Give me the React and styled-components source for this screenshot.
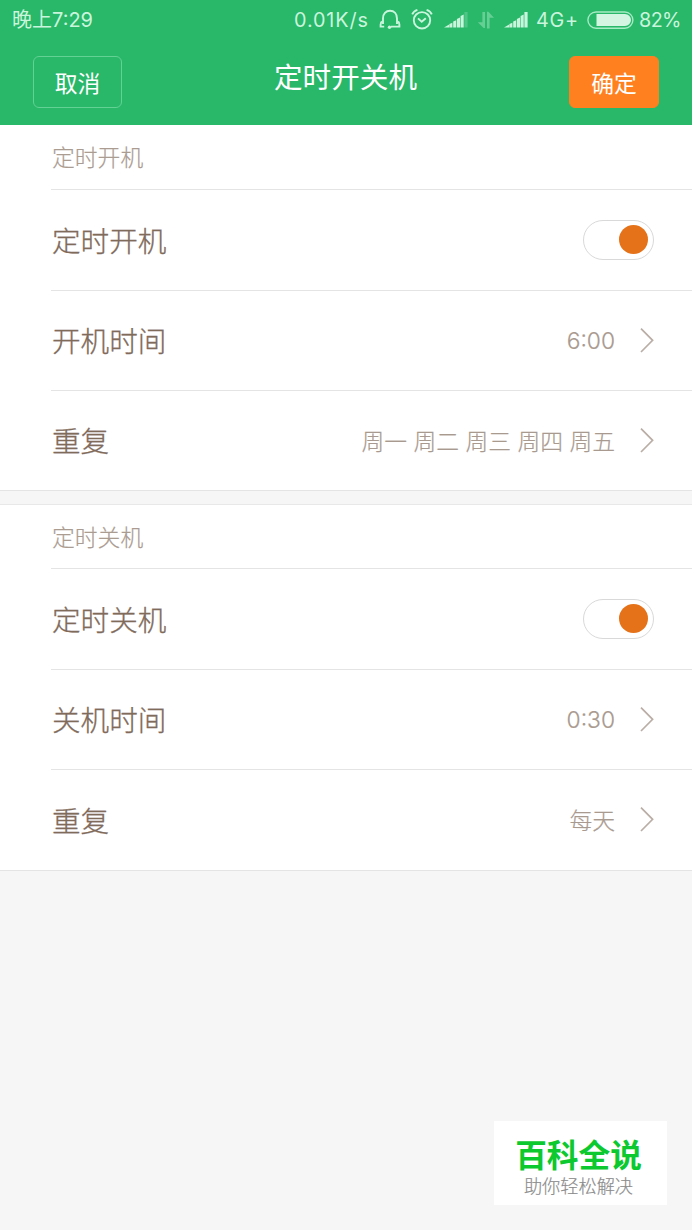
import React from 'react'
import styled, { createGlobalStyle } from 'styled-components'

const GlobalStyle = createGlobalStyle`
* {
    box-sizing: border-box;
}

body {
    margin: 0;
    background-color: #f6f6f6;
    font-family: Inter, "Noto Sans CJK SC", sans-serif;
}
`

const Signal = ({ weak }) => (
    <svg width="25" height="18" viewBox="0 0 25 18" fill="#c9f5dc">
        <path d="M0 16.5 L5.2 13.5 V16.5Z" />
        <path d="M5.4 13 L8.4 11.8 V16.5 H5.4Z" />
        <path d="M9.2 10.5 L12.2 9.2 V16.5 H9.2Z" />
        <path d="M12.9 8 L16 6.6 V16.5 H12.9Z" />
        <path d="M16.6 5 L19.7 3.6 V16.5 H16.6Z" />
        <rect x="20.4" y="1" width="3.2" height="15.5" opacity={weak ? 0.25 : 1} />
    </svg>
)

const Headphones = () => (
    <svg width="22" height="22" viewBox="0 0 22 22" fill="none" stroke="#c9f5dc" strokeWidth="1.9">
        <path d="M4 15 V9.4 C4 5 6.8 1.8 11 1.8 S18 5 18 9.4 V15" />
        <path d="M3.6 12.5 C2 13 1.6 14.2 1.6 15.4 V17.6 H5.2 M18.4 12.5 C20 13 20.4 14.2 20.4 15.4 V17.6 H12" strokeWidth="1.9" />
        <circle cx="10.5" cy="18.2" r="1.7" fill="#c9f5dc" stroke="none" />
    </svg>
)

const Alarm = () => (
    <svg width="22" height="22" viewBox="0 0 22 22" fill="none" stroke="#c9f5dc" strokeWidth="1.9">
        <circle cx="11" cy="11.3" r="8.2" />
        <path d="M7 9.4 L10.7 12.8 L14.8 9.2" />
        <path d="M1.2 5.4 C2 3.4 3.7 1.8 6.4 0.9 M20.8 5.4 C20 3.4 18.3 1.8 15.6 0.9" />
    </svg>
)

const Transfer = () => (
    <svg width="18" height="18" viewBox="0 0 18 18" fill="#66cf94">
        <path d="M5.4 1 H8 V17 H6.6 L0.8 11.2 H5.4Z" />
        <path d="M10 17.4 V0.8 H11.4 L17 6.8 H12.6 V17.4Z" />
    </svg>
)

const Battery = () => (
    <svg width="47" height="19" viewBox="0 0 47 19">
        <rect x="0.9" y="1" width="45" height="16.2" rx="8.1" fill="none" stroke="#a5ebc3" strokeWidth="1.4" />
        <path d="M9.5 3.1 H38 A6 6 0 0 1 38 15.1 H9.5 Z" fill="#d3f5e1" />
    </svg>
)

const Arrow = () => (
    <ArrowIcon width="14" height="26" viewBox="0 0 14 26" fill="none" stroke="#b9ada5" strokeWidth="1.7">
        <path d="M1 0.7 L12.6 12.3 L1 24" />
    </ArrowIcon>
)

const Item = ({ label, value, tall }) => (
    <Row $tall={tall}>
        <Label>{label}</Label>
        {value ? (
            <>
                <Value>{value}</Value>
                <Arrow />
            </>
        ) : (
            <Toggle>
                <Knob />
            </Toggle>
        )}
    </Row>
)

const App = () => {
    return (
        <Page>
            <GlobalStyle />
            <Header>
                <StatusBar>
                    <Clock>晚上7:29</Clock>
                    <StatusIcons>
                        <StatusText $width="73px" $spacing="0.9px">0.01K/s</StatusText>
                        <StatusIcon $left="12px"><Headphones /></StatusIcon>
                        <StatusIcon $left="10px"><Alarm /></StatusIcon>
                        <StatusIcon $left="11px"><Signal weak /></StatusIcon>
                        <StatusIcon $left="8px"><Transfer /></StatusIcon>
                        <StatusIcon $left="9px"><Signal /></StatusIcon>
                        <StatusText $width="42px" $left="7px" $spacing="0.7px">4G+</StatusText>
                        <StatusIcon $left="9px"><Battery /></StatusIcon>
                        <StatusText $width="41px" $left="5px" $spacing="-0.6px">82%</StatusText>
                    </StatusIcons>
                </StatusBar>
                <NavBar>
                    <Button>取消</Button>
                    <Title>定时开关机</Title>
                    <Button $primary>确定</Button>
                </NavBar>
            </Header>

            <Section>
                <SectionTitle $height="65px">定时开机</SectionTitle>
                <Item label="定时开机" tall />
                <Item label="开机时间" value="6:00" />
                <Item label="重复" value="周一 周二 周三 周四 周五" />
            </Section>
            <Gap />
            <Section>
                <SectionTitle $height="64px">定时关机</SectionTitle>
                <Item label="定时关机" tall />
                <Item label="关机时间" value="0:30" />
                <Item label="重复" value="每天" tall />
            </Section>

            <Brand>
                <BrandName>百科全说</BrandName>
                <BrandText>助你轻松解决</BrandText>
            </Brand>
        </Page>
    )
}

const Page = styled.div`
position: relative;
width: 692px;
height: 1230px;
background-color: #f6f6f6;
overflow: hidden;
`

const Header = styled.header`
height: 125px;
background-color: #29b76a;
`

const StatusBar = styled.div`
display: flex;
align-items: center;
justify-content: space-between;
height: 40px;
padding: 0 12px;
color: #c9f5dc;
`

const Clock = styled.div`
font-size: 20px;
line-height: 40px;
white-space: nowrap;
`

const StatusIcons = styled.div`
display: flex;
align-items: center;
`

const StatusIcon = styled.span`
display: flex;
margin-left: ${props => props.$left};
`

const StatusText = styled.span`
width: ${props => props.$width};
margin-left: ${props => props.$left || 0};
font-size: 19.8px;
line-height: 40px;
letter-spacing: ${props => props.$spacing};
white-space: nowrap;
`

const NavBar = styled.div`
display: flex;
justify-content: space-between;
padding: 16px 33px 0;
`

const Button = styled.button`
width: ${props => (props.$primary ? '90px' : '89px')};
height: 52px;
padding: 0;
border: 1px solid ${props => (props.$primary ? '#ff801f' : '#62d193')};
border-radius: 6px;
background-color: ${props => (props.$primary ? '#ff801f' : 'transparent')};
color: #fff;
font-family: inherit;
font-size: 22.8px;
font-weight: 400;
`

const Title = styled.h1`
margin: 0;
font-size: 28.6px;
font-weight: 400;
line-height: 44px;
color: #fff;
`

const Section = styled.section`
background-color: #fff;
padding-left: 51px;
`

const SectionTitle = styled.h2`
margin: 0;
height: ${props => props.$height};
padding-left: 1px;
border-bottom: 1px solid #e4e4e4;
font-size: 22.8px;
font-weight: 300;
line-height: 65px;
color: #ab9c92;
-webkit-text-stroke: 0.2px #ab9c92;
`

const Row = styled.div`
display: flex;
align-items: center;
height: ${props => (props.$tall ? '101px' : '100px')};
padding-right: 38px;
border-bottom: 1px solid #e4e4e4;

&:last-child {
    margin-left: -51px;
    padding-left: 51px;
}
`

const Label = styled.div`
flex: 1;
padding: 0 0 2px 1px;
font-size: 28.6px;
font-weight: 300;
color: #806a5a;
-webkit-text-stroke: 0.3px #806a5a;
`

const Value = styled.div`
padding-bottom: 1px;
font-size: 22.8px;
font-weight: 300;
color: #a99a8f;
-webkit-text-stroke: 0.2px #a99a8f;
`

const ArrowIcon = styled.svg`
margin-left: 25px;
`

const Toggle = styled.div`
display: flex;
align-items: center;
justify-content: flex-end;
width: 71px;
height: 40px;
margin-bottom: 1px;
padding-right: 5px;
border: 1px solid #d9d9d9;
border-radius: 20px;
`

const Knob = styled.div`
width: 29px;
height: 29px;
border-radius: 50%;
background-color: #e57218;
`

const Gap = styled.div`
height: 14px;
border-bottom: 1px solid #e8e8e8;
`

const Brand = styled.div`
position: absolute;
left: 494px;
top: 1121px;
width: 173px;
height: 84px;
padding-top: 12px;
background-color: #fff;
text-align: center;
`

const BrandName = styled.div`
font-size: 31.7px;
font-weight: 700;
line-height: 46px;
padding-right: 4px;
color: #0cc92f;
`

const BrandText = styled.div`
font-size: 18.2px;
font-weight: 300;
line-height: 14px;
padding-right: 4px;
color: #8c8c8c;
-webkit-text-stroke: 0.2px #8c8c8c;
`

export default App
